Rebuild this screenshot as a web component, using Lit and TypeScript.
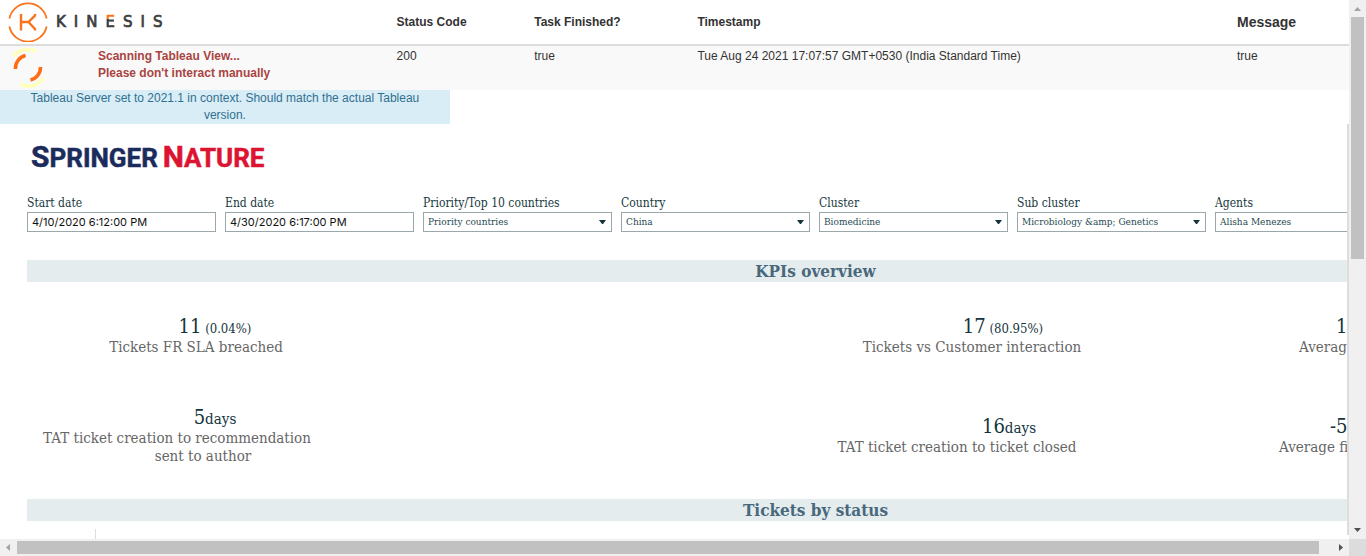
import { LitElement, html, css, svg, nothing } from "lit";
import { customElement, property } from "lit/decorators.js";

interface Filter {
  id: string;
  label: string;
  value: string;
  kind: "text" | "select";
}

interface Kpi {
  value: string;
  suffix: string;
  lines: string[];
  kind: string;
}

const FILTERS: Filter[] = [
  { id: "start", label: "Start date", value: "4/10/2020 6:12:00 PM", kind: "text" },
  { id: "end", label: "End date", value: "4/30/2020 6:17:00 PM", kind: "text" },
  { id: "priority", label: "Priority/Top 10 countries", value: "Priority countries", kind: "select" },
  { id: "country", label: "Country", value: "China", kind: "select" },
  { id: "cluster", label: "Cluster", value: "Biomedicine", kind: "select" },
  { id: "subcluster", label: "Sub cluster", value: "Microbiology &amp; Genetics", kind: "select" },
  { id: "agents", label: "Agents", value: "Alisha Menezes", kind: "select" },
];

const KPIS: Kpi[] = [
  { value: "11", suffix: " (0.04%)", lines: ["Tickets FR SLA breached"], kind: "breached" },
  { value: "17", suffix: " (80.95%)", lines: ["Tickets vs Customer interaction"], kind: "interaction" },
  { value: "1", suffix: "", lines: ["Averag"], kind: "average" },
  { value: "5", suffix: "days", lines: ["TAT ticket creation to recommendation", "sent to author"], kind: "recommendation" },
  { value: "16", suffix: "days", lines: ["TAT ticket creation to ticket closed"], kind: "closed" },
  { value: "-5", suffix: "", lines: ["Average fi"], kind: "average-first" },
];

@customElement("kinesis-logo")
export class KinesisLogo extends LitElement {
  static styles = css`
    :host {
      display: flex;
      align-items: center;
      gap: 8px;
    }
    .mark {
      display: block;
      width: 40px;
      height: 40px;
    }
    .word {
      display: flex;
      gap: 8px;
      font: 15px/20px "DejaVu Sans", sans-serif;
      color: #3d3d3d;
      -webkit-text-stroke: 0.7px currentColor;
    }
    .accent {
      color: transparent;
      -webkit-text-stroke: 0.7px transparent;
      background: linear-gradient(#f9731c 7px, #3d3d3d 7px);
      background-clip: text;
      -webkit-background-clip: text;
    }
  `;

  render() {
    return html`
      <svg class="mark" viewBox="0 0 40 40" fill="none" stroke="#f9731c" aria-hidden="true">
        <path d="M1.400 16.500A19 19 0 0 1 38.600 16.500M1.400 24.500A19 19 0 0 0 38.600 24.500" stroke-width="1.800" />
        <path d="M13 12V28.500M13 20H20.500L27 13.500V12M20.500 20L27 27V28.500" stroke-width="2.400" />
      </svg>
      <span class="word" role="img" aria-label="KINESIS"
        >${[..."KINESIS"].map((c) => html`<span class=${c === "E" ? "accent" : ""}>${c}</span>`)}</span
      >
    `;
  }
}

@customElement("scroll-bar")
export class ScrollBar extends LitElement {
  @property({ reflect: true }) direction: "vertical" | "horizontal" = "vertical";
  @property({ type: Number }) visible = 50;

  static styles = css`
    :host {
      display: flex;
      background: #f0f0f0;
    }
    :host([direction="vertical"]) {
      flex-direction: column;
    }
    .arrow {
      display: block;
      flex: none;
      width: 17px;
      height: 17px;
    }
    .track {
      flex: 1;
      min-width: 0;
      min-height: 0;
      box-sizing: border-box;
    }
    :host([direction="vertical"]) .track {
      padding: 0 2px;
    }
    :host([direction="horizontal"]) .track {
      padding: 2px 0;
    }
    .thumb {
      width: 100%;
      height: 100%;
      background: #c1c1c1;
    }
  `;

  render() {
    const vertical = this.direction === "vertical";
    const arrow = (d: string, color: string) =>
      svg`<svg class="arrow" viewBox="0 0 17 17" aria-hidden="true"><path d=${d} fill=${color} /></svg>`;
    return html`
      ${arrow(vertical ? "M5 11H12L8.500 7Z" : "M10 5V12L6 8.500Z", "#a3a3a3")}
      <div class="track">
        <div class="thumb" style=${vertical ? `height:${this.visible}%` : `width:${this.visible}%`}></div>
      </div>
      ${arrow(vertical ? "M5 6H12L8.500 10Z" : "M7 5V12L11 8.500Z", "#505050")}
    `;
  }
}

@customElement("app-root")
export class AppRoot extends LitElement {
  static styles = css`
    :host {
      display: grid;
      grid-template: minmax(0, 1fr) 17px / minmax(0, 1fr) 17px;
      height: 100vh;
      overflow: hidden;
      background: #fff;
      color: #333;
      font: 12px/17px "Liberation Sans", Arial, sans-serif;
    }
    .view {
      display: flex;
      flex-direction: column;
      overflow: hidden;
    }
    .corner {
      background: #dcdcdc;
    }

    .status {
      width: 100%;
      flex: none;
      table-layout: fixed;
      border-collapse: separate;
      border-spacing: 0;
    }
    .status th,
    .status td {
      padding: 0;
      text-align: left;
      vertical-align: top;
      white-space: nowrap;
    }
    .status th {
      height: 44px;
      vertical-align: middle;
      border-bottom: 2px solid #ddd;
    }
    .status td {
      height: 42px;
      padding-top: 2px;
      background: #f9f9f9;
    }
    .status .message {
      font-size: 14px;
    }
    .col-state {
      width: 29.4%;
    }
    .col-code {
      width: 10.2%;
    }
    .col-done {
      width: 12.1%;
    }
    .col-time {
      width: 40%;
    }
    .brand {
      padding-left: 8px;
    }
    .progress {
      display: flex;
      gap: 50px;
      padding-left: 8px;
      color: #a94442;
      font-weight: bold;
    }
    .spinner {
      flex: none;
      display: block;
      width: 40px;
      height: 40px;
    }

    .notice {
      flex: none;
      box-sizing: border-box;
      width: 33.35%;
      padding: 0 30px;
      background: #d9edf7;
      color: #31708f;
      text-align: center;
    }

    .frame {
      flex: 1;
      min-height: 0;
      display: flex;
    }
    .edge {
      flex: none;
      width: 2px;
      margin-bottom: 4px;
      background: #ddd;
    }
    .dashboard {
      flex: 1;
      min-width: 0;
      overflow: hidden;
      box-sizing: border-box;
      padding: 17px 0 0 27px;
      font-family: "DejaVu Serif Condensed", "DejaVu Serif", serif;
      font-stretch: condensed;
    }
    .publisher {
      display: flex;
      gap: 5px;
      height: 32px;
      padding-left: 4px;
      font: bold 26px/32px Roboto, sans-serif;
      color: #1b2c5c;
      -webkit-text-stroke: 0.5px currentColor;
    }
    .publisher .first {
      font-size: 30px;
    }
    .publisher .nature {
      color: #dc1431;
    }

    .filters {
      display: flex;
      gap: 9px;
      margin-top: 22px;
    }
    .filter {
      flex: none;
      width: 189px;
    }
    .filter label {
      display: block;
      font-size: 12px;
      line-height: 17px;
      color: #173840;
    }
    .box {
      display: flex;
      position: relative;
    }
    .field {
      appearance: none;
      width: 100%;
      height: 20px;
      margin: 0;
      box-sizing: border-box;
      border: 1px solid #9aa8ab;
      border-radius: 0;
      padding: 0 4px;
      background: #fff;
      color: #274a52;
      font: 10px/18px "DejaVu Serif Condensed", "DejaVu Serif", serif;
      font-stretch: condensed;
    }
    .date {
      color: #111;
      font: 11px/18px Inter, sans-serif;
    }
    .caret {
      position: absolute;
      right: 6px;
      top: 8px;
      width: 7px;
      height: 5px;
      fill: #14343d;
      pointer-events: none;
    }

    .sheet {
      width: 1577px;
    }
    .band {
      margin: 28px 0 0;
      background: #e4ecee;
      color: #49687c;
      text-align: center;
      font-size: 17px;
      line-height: 22px;
    }
    .kpis {
      display: grid;
      grid-template-columns: 394px 394px 394px 394px;
      grid-template-rows: 91px 66px;
      padding-top: 32px;
    }
    .kpi {
      text-align: center;
      color: #666;
      font-size: 15px;
      line-height: 18px;
    }
    .value {
      height: 24px;
      padding-right: 18px;
      color: #14343d;
      font-size: 20px;
      line-height: 24px;
    }
    .suffix {
      font-size: 15px;
    }
    .percent {
      font-size: 13px;
    }
    .line {
      display: block;
    }
    .interaction,
    .closed {
      grid-column: 3;
    }
    .recommendation {
      grid-column: 1;
    }
    .closed,
    .average-first {
      padding-top: 9px;
    }
    .closed .value {
      padding-right: 6px;
    }
    .breached .line {
      padding-right: 56px;
    }
    .interaction .line {
      padding-right: 80px;
    }
    .recommendation .line {
      padding-right: 94px;
    }
    .recommendation .line + .line {
      padding-right: 42px;
    }
    .closed .line {
      padding-right: 110px;
    }
    .average,
    .average-first {
      text-align: left;
    }
    .average .line {
      padding-left: 90px;
    }
    .average .value {
      padding-left: 127px;
    }
    .average-first .line {
      padding-left: 70px;
    }
    .average-first .value {
      padding-left: 121px;
    }
    .chart {
      height: 60px;
      margin: 8px 0 0 68px;
      border-left: 1px solid #ddd;
    }
  `;

  private renderFilter(f: Filter) {
    return html`
      <div class="filter">
        <label for=${f.id}>${f.label}</label>
        <div class="box">
          ${f.kind === "text"
            ? html`<input id=${f.id} class="field date" type="text" .value=${f.value} />`
            : html`<select id=${f.id} class="field">
                  <option>${f.value}</option>
                </select>
                <svg class="caret" viewBox="0 0 7 5" aria-hidden="true"><path d="M0 0H7L4 4H3Z" /></svg>`}
        </div>
      </div>
    `;
  }

  private renderKpi(k: Kpi) {
    const suffixClass = k.suffix.includes("%") ? "percent" : "suffix";
    return html`
      <div class="kpi ${k.kind}">
        <div class="value">${k.value}${k.suffix ? html`<span class=${suffixClass}>${k.suffix}</span>` : nothing}</div>
        ${k.lines.map((l) => html`<span class="line">${l}</span>`)}
      </div>
    `;
  }

  render() {
    return html`
      <main class="view">
        <table class="status">
          <colgroup>
            <col class="col-state" />
            <col class="col-code" />
            <col class="col-done" />
            <col class="col-time" />
            <col />
          </colgroup>
          <thead>
            <tr>
              <th><kinesis-logo class="brand"></kinesis-logo></th>
              <th>Status Code</th>
              <th>Task Finished?</th>
              <th>Timestamp</th>
              <th class="message">Message</th>
            </tr>
          </thead>
          <tbody>
            <tr>
              <td>
                <div class="progress">
                  <svg class="spinner" viewBox="0 0 40 40" fill="none" aria-hidden="true">
                    <path d="M5.500 8A18.500 18.500 0 0 1 28 3.500M12 36A18 18 0 0 0 35.500 30" stroke="#ffffc0" stroke-width="4" />
                    <path d="M7.500 21A13 13 0 0 1 17.500 7.500M32.500 19A13 13 0 0 1 22.500 32" stroke="#ff6b15" stroke-width="3.500" />
                  </svg>
                  <div>
                    <span class="line">Scanning Tableau View...</span>
                    <span class="line">Please don't interact manually</span>
                  </div>
                </div>
              </td>
              <td>200</td>
              <td>true</td>
              <td>Tue Aug 24 2021 17:07:57 GMT+0530 (India Standard Time)</td>
              <td>true</td>
            </tr>
          </tbody>
        </table>
        <div class="notice">
          Tableau Server set to 2021.1 in context. Should match the actual Tableau version.
        </div>
        <div class="frame">
          <section class="dashboard">
            <div class="publisher">
              <span><span class="first">S</span>PRINGER</span>
              <span class="nature"><span class="first">N</span>ATURE</span>
            </div>
            <div class="filters">${FILTERS.map((f) => this.renderFilter(f))}</div>
            <div class="sheet">
              <h2 class="band">KPIs overview</h2>
              <div class="kpis">${KPIS.map((k) => this.renderKpi(k))}</div>
              <h2 class="band">Tickets by status</h2>
              <div class="chart"></div>
            </div>
          </section>
          <div class="edge"></div>
        </div>
      </main>
      <scroll-bar direction="vertical" .visible=${48}></scroll-bar>
      <scroll-bar direction="horizontal" .visible=${99}></scroll-bar>
      <div class="corner"></div>
    `;
  }
}
